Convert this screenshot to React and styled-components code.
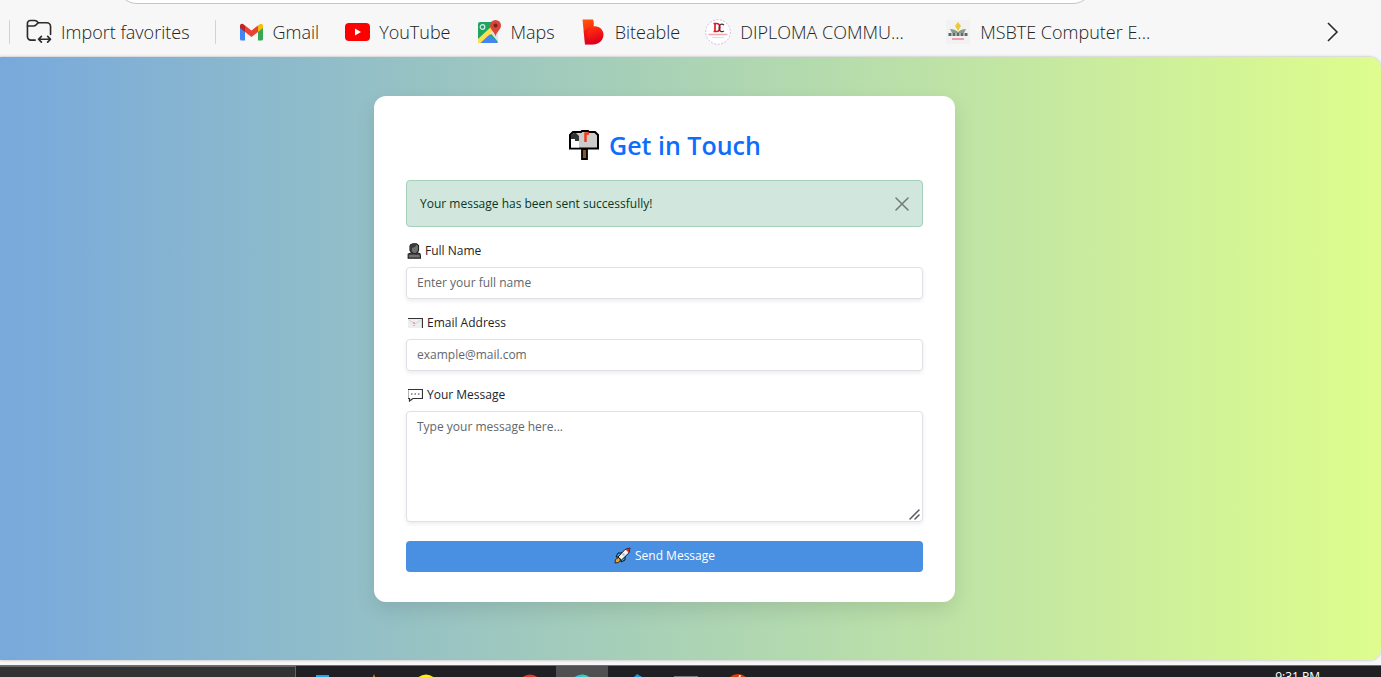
import React from "react";
import styled, { createGlobalStyle } from "styled-components";

const GlobalStyle = createGlobalStyle`
  *, *::before, *::after { box-sizing: border-box; }
  body {
    margin: 0;
    background: #f7f7f7;
    color: #212529;
    font-family: "Open Sans", "Noto Sans", sans-serif;
  }
  button, input, textarea { font: inherit; }
`;

const Screen = styled.div`
  display: flex;
  flex-direction: column;
  min-height: 100vh;
  overflow: hidden;
`;

const Header = styled.header`
  flex: none;
  background: #f7f7f7;
`;

const AddressRow = styled.div`
  display: flex;
  align-items: flex-end;
  height: 4px;
  padding: 0 288px 0 117px;
  overflow: hidden;
`;

const AddressInput = styled.input`
  flex: none;
  width: 100%;
  height: 40px;
  border: 1px solid #c4c4c4;
  border-radius: 20px;
  background: #ffffff;
`;

const Favorites = styled.nav`
  display: flex;
  align-items: center;
  height: 53px;
  padding: 2px 40px 0 9px;
`;

const Divider = styled.span`
  flex: none;
  width: 1px;
  height: 24px;
  background: #d2d2d2;
`;

const FavoriteList = styled.div`
  display: flex;
  flex: 1;
  gap: 25px;
  min-width: 0;
  margin-left: 22px;
`;

const favoriteLook = `
  display: flex;
  align-items: center;
  gap: 9px;
  flex: none;
  color: #222222;
  font-size: 18px;
  font-weight: 300;
  line-height: 26px;
  text-decoration: none;
  svg { flex: none; width: 26px; height: 26px; }
`;

const Favorite = styled.a`
  ${favoriteLook}
`;

const FavoriteText = styled.span`
  width: ${(p) => (p.$long ? "180px" : "auto")};
  overflow: hidden;
  white-space: nowrap;
`;

const ImportButton = styled.button`
  ${favoriteLook}
  margin: 0 25px 0 16px;
  padding: 0;
  border: 0;
  background: none;
`;

const MoreButton = styled.button`
  display: flex;
  flex: none;
  padding: 0;
  border: 0;
  background: none;
`;

const Page = styled.main`
  display: flex;
  flex: 1;
  justify-content: center;
  align-items: flex-start;
  padding: 39px 52px 58px 0;
  border-radius: 0 12px 12px 0;
  background: linear-gradient(to right, #78a9dc, #defd8d);
  box-shadow: 0 0 3px rgba(0, 0, 0, 0.3);
`;

const Card = styled.section`
  width: 100%;
  max-width: 581px;
  padding: 32px 32px 30px;
  border-radius: 12px;
  background: #ffffff;
  box-shadow: 0 8px 20px rgba(0, 0, 0, 0.1);
`;

const Title = styled.h1`
  display: flex;
  justify-content: center;
  align-items: center;
  gap: 9px;
  margin: 0 0 18px;
  color: #0d6efd;
  font-size: 25px;
  font-weight: 600;
  line-height: 34px;
`;

const Alert = styled.div`
  display: flex;
  align-items: center;
  justify-content: space-between;
  height: 47px;
  padding: 0 13px;
  border: 1px solid #a3cfbb;
  border-radius: 4px;
  background: #d1e7dd;
  color: #0a3622;
  font-size: 12px;
  line-height: 20px;
`;

const CloseButton = styled.button`
  display: flex;
  padding: 0;
  border: 0;
  background: none;
`;

const Field = styled.div`
  margin-top: 14px;
`;

const Label = styled.label`
  display: flex;
  align-items: center;
  gap: 4px;
  margin-bottom: 6px;
  font-size: 12px;
  line-height: 20px;
`;

const controlLook = `
  display: block;
  width: 100%;
  padding: 0 10px 2px;
  border: 1px solid #dee2e6;
  border-radius: 4px;
  background: #ffffff;
  color: #212529;
  font-size: 12px;
  line-height: 20px;
  box-shadow: 0 2px 4px rgba(0, 0, 0, 0.08);
  &::placeholder { color: #62676c; opacity: 1; }
`;

const TextInput = styled.input`
  ${controlLook}
  height: 32px;
`;

const MessageBox = styled.div`
  position: relative;
`;

const MessageInput = styled.textarea`
  ${controlLook}
  height: 111px;
  padding: 5px 10px;
  resize: vertical;
  &::-webkit-resizer { display: none; }
`;

const Grip = styled.svg`
  position: absolute;
  right: 2px;
  bottom: 2px;
  pointer-events: none;
`;

const SendButton = styled.button`
  display: flex;
  align-items: center;
  justify-content: center;
  gap: 4px;
  width: 100%;
  height: 31px;
  margin-top: 19px;
  padding: 0 0 2px;
  border: 0;
  border-radius: 4px;
  background: #4a90e2;
  color: #ffffff;
  font-size: 12px;
  line-height: 20px;
`;

const Taskbar = styled.footer`
  display: flex;
  flex: none;
  height: 12px;
  margin-top: 5px;
  border-top: 1px solid #6f6f70;
  background: #202024;
  overflow: hidden;
`;

const SearchArea = styled.div`
  flex: none;
  width: 296px;
  height: 40px;
  border: 1px solid #656565;
  border-width: 1px 1px 0 0;
  background: #333333;
`;

const TaskButton = styled.button`
  display: flex;
  flex: none;
  justify-content: center;
  width: 52px;
  height: 40px;
  padding: 7px 0 0;
  border: 0;
  background: ${(p) => (p.$active ? "#505053" : "transparent")};
`;

const Clock = styled.time`
  margin-left: auto;
  padding-right: 61px;
  color: #ffffff;
  font-size: 12px;
  line-height: 22px;
`;

const ImportIcon = () => (
  <svg viewBox="0 0 27 26" fill="none" stroke="#2b2b2b" strokeWidth="1.7" strokeLinecap="round" strokeLinejoin="round">
    <path d="M9.500 21.500H5a3.500 3.500 0 0 1-3.500-3.500V4a3 3 0 0 1 3-3h4.500a3 3 0 0 1 2 .8L12.800 3.400H21.500A4 4 0 0 1 25.500 7.400V15.500" />
    <path d="M1.500 6.800H8a3 3 0 0 0 2.100-.9L12.800 3.400" />
    <path d="M13 20.500H25.500M16 17.500L13 20.500l3 3M22.500 17.500l3 3-3 3" />
  </svg>
);

const GmailIcon = () => (
  <svg viewBox="0 0 26 26">
    <path d="M2 8v12a1.500 1.500 0 0 0 1.500 1.500H7V11z" fill="#4285f4" />
    <path d="M25 8v12a1.500 1.500 0 0 1-1.500 1.500H20V11z" fill="#34a853" />
    <path d="M20 6.500L22 5a2 2 0 0 1 3 1.700V9l-5 4z" fill="#fbbc04" />
    <path d="M2 9V6.700A2 2 0 0 1 5 5l2 1.500V13z" fill="#c5221f" />
    <path d="M7 6.500l6.500 5 6.500-5V13l-6.500 5L7 13z" fill="#ea4335" />
  </svg>
);

const YouTubeIcon = () => (
  <svg viewBox="0 0 26 26">
    <rect x="1" y="4" width="25" height="18" rx="4" fill="#ff0000" />
    <path d="M11 9.500v7l6-3.500z" fill="#ffffff" />
  </svg>
);

const MapsIcon = () => (
  <svg viewBox="0 0 26 26">
    <rect x="2" y="3" width="20" height="21" rx="2" fill="#1fa463" />
    <path d="M2 20L18 5l4 4L5 24H3a1 1 0 0 1-1-1z" fill="#ffdf4d" />
    <path d="M4.500 24L13.500 15.500 22 24z" fill="#4285f4" />
    <path d="M14.500 14L22 6v17z" fill="#dfe2e6" />
    <circle cx="6.500" cy="8" r="2.300" fill="none" stroke="#d9f2e4" strokeWidth="1.200" />
    <path d="M19.500 1a5.500 5.500 0 0 1 5.500 5.500c0 4-4.500 6-5.500 11-1-5-5.500-7-5.500-11A5.500 5.500 0 0 1 19.500 1z" fill="#db4437" />
    <circle cx="19.500" cy="6.500" r="2" fill="#7b231d" />
  </svg>
);

const BiteableIcon = () => (
  <svg viewBox="0 0 26 26">
    <defs>
      <linearGradient id="bite" x1="0" y1="0" x2="0.300" y2="1">
        <stop offset="0" stopColor="#ff5a0a" />
        <stop offset="0.550" stopColor="#fb2410" />
        <stop offset="1" stopColor="#df001c" />
      </linearGradient>
    </defs>
    <path d="M2.500 0.500h10.500c1 2.500 1 4.500.5 6.700C19.500 6.500 23.500 11 23.500 15.500S20 25.500 13 25.500H5z" fill="url(#bite)" />
    <path d="M13.500 7.200c-2 .8-4.500 2.800-6.500 6.300 0 5 2.500 9 6 12H5L3.500 12z" fill="#d9001e" opacity=".35" />
  </svg>
);

const DiplomaIcon = () => (
  <svg viewBox="0 0 26 26">
    <circle cx="13" cy="13" r="12.300" fill="#ffffff" stroke="#d5b4f3" strokeWidth="1" strokeDasharray="2 1.500" />
    <path d="M10 4.500h1.500c4.500 0 4.500 8 0 8H10zM8.500 4.500h3M8.500 12.500h3" fill="none" stroke="#e11b2b" strokeWidth="1.700" />
    <path d="M19 6c-3-2-5 0-5 3s2.500 4.500 5 3" fill="none" stroke="#3b3438" strokeWidth="1.200" />
    <path d="M3.500 15.500h19" stroke="#f2adb0" strokeWidth="1.600" />
    <path d="M7 18.500h12" stroke="#dedede" strokeWidth="1" />
  </svg>
);

const MsbteIcon = () => (
  <svg viewBox="0 0 26 26">
    <rect x="1" y="1" width="24" height="24" fill="#f2f2f2" />
    <path d="M5 10c3 0 6 1 8 3 2-2 5-3 8-3l-2 4H7z" fill="#8c9b8a" />
    <path d="M13 3l3 4-3 5-3-5z" fill="#eccb31" />
    <path d="M3.500 15.500h19" stroke="#5c6979" strokeWidth="3" strokeDasharray="3 1" />
    <path d="M7 20h12" stroke="#e58391" strokeWidth="1.400" />
  </svg>
);

const MailboxIcon = () => (
  <svg width="32" height="32" viewBox="0 0 32 32" aria-hidden="true">
    <path d="M14 20h5v10h-5z" fill="#8a5430" stroke="#000000" strokeWidth="1.800" />
    <path d="M5 3h8l1-1h6l1 1h6l3 3v13.500H2V6z" fill="#cccccc" stroke="#000000" strokeWidth="2" />
    <path d="M3 10V6l3-2h2l3 3v5H7v-2z" fill="#333333" />
    <path d="M3 10h4v2h4v6.500H3z" fill="#ffffff" />
    <path d="M17.500 13V4.500H21" fill="none" stroke="#f03a17" strokeWidth="2.500" />
  </svg>
);

const PersonIcon = () => (
  <svg width="15" height="16" viewBox="0 0 15 16" aria-hidden="true">
    <path d="M5 1.500L7 .8h3.500l2 1.700v5l-1.500 2 3 1.500.8 4.200H2.200v-4L6 9.500l-2-2V3z" fill="#707070" stroke="#222222" strokeWidth="1.200" />
    <path d="M4 3.500L6 1h5L9 4 6 5v3L4 7z" fill="#3a3a3a" />
    <path d="M3 11h11M6 10l5 1" stroke="#222222" />
  </svg>
);

const MailIcon = () => (
  <svg width="17" height="12" viewBox="0 0 17 12" aria-hidden="true">
    <rect x="2" y="1" width="15" height="10" fill="#eeeeee" />
    <path d="M2 1.500h15M16.500 1v10" stroke="#333333" strokeWidth="1.200" />
    <path d="M3 3l6 4 6-4" stroke="#d4d4d4" fill="none" />
    <path d="M8 5v2M8 8v1" stroke="#e57474" />
  </svg>
);

const ChatIcon = () => (
  <svg width="17" height="14" viewBox="0 0 17 14" fill="none" stroke="#333333" aria-hidden="true">
    <path d="M2 1.500h14.500v9H7L3.500 13v-2.500H2" strokeWidth="1.200" />
    <path d="M2.500 2v8" stroke="#b5b5b5" />
    <path d="M5 6h1.500M8.500 6H10M12 6h1.500" />
  </svg>
);

const RocketIcon = () => (
  <svg width="17" height="17" viewBox="0 0 17 17" strokeLinejoin="round" aria-hidden="true">
    <path d="M2 10l2-4h4L6 10zM7 15l4-2V9l-4 3z" fill="#36b6e5" stroke="#111111" />
    <path d="M4.500 10.500L1.500 12.500 1 16l3.500-.5 2-2.500z" fill="#f7a12a" stroke="#111111" strokeWidth=".8" />
    <path d="M4 10L11 2.500 16 1l-1.200 5L7.500 13z" fill="#f4f4f4" stroke="#111111" />
    <path d="M11.500 2.500L16 1l-1.300 4.500z" fill="#e0202c" />
    <circle cx="9.500" cy="7.500" r="1.200" fill="#9bbdd0" />
  </svg>
);

const favorites = [
  { name: "Gmail", Icon: GmailIcon },
  { name: "YouTube", Icon: YouTubeIcon },
  { name: "Maps", Icon: MapsIcon },
  { name: "Biteable", Icon: BiteableIcon },
  { name: "DIPLOMA COMMU...", Icon: DiplomaIcon, long: true },
  { name: "MSBTE Computer E...", Icon: MsbteIcon, long: true },
];

const Disc = ({ color, half }) => (
  <svg width="26" height="26" viewBox="0 0 26 26">
    <circle cx="13" cy="13.500" r="12" fill={color} />
    {half && <path d="M13 1.500a12 12 0 0 1 8 3.500h-8z" fill={half} />}
  </svg>
);

const tasks = [
  { name: "Store", art: <svg width="26" height="26"><path d="M7 2h13v3h3v18H4V5h3z" fill="#1ba8ef" /></svg> },
  { name: "Player", art: <svg width="26" height="26"><path d="M13 1l8 22H5z" fill="#e87a12" /></svg> },
  { name: "Notes", art: <Disc color="#fff200" /> },
  { name: "Terminal", art: null },
  { name: "Browser", art: <Disc color="#e33b2e" /> },
  { name: "Edge", art: <Disc color="#2ec4dc" half="#39d0b0" />, active: true },
  { name: "Editor", art: <svg width="26" height="26"><path d="M16 1l7 4v18H8L2 15z" fill="#1c93dc" /></svg> },
  { name: "Window", art: <svg width="26" height="26"><path d="M1 4h24" stroke="#77777a" strokeWidth="2" /></svg> },
  { name: "Server", art: <svg width="26" height="26"><circle cx="13" cy="13" r="12" fill="#dc3e0b" /><path d="M13 6l2-4v6" stroke="#ffffff" fill="none" /></svg> },
];

export default function App() {
  return (
    <Screen>
      <GlobalStyle />
      <Header>
        <AddressRow>
          <AddressInput aria-label="Address" />
        </AddressRow>
        <Favorites aria-label="Favorites">
          <Divider />
          <ImportButton type="button">
            <ImportIcon />
            Import favorites
          </ImportButton>
          <Divider />
          <FavoriteList>
            {favorites.map(({ name, Icon, long }) => (
              <Favorite href="#" key={name}>
                <Icon />
                <FavoriteText $long={long}>{name}</FavoriteText>
              </Favorite>
            ))}
          </FavoriteList>
          <MoreButton type="button" aria-label="More favorites">
            <svg width="16" height="22" viewBox="0 0 16 22" fill="none" stroke="#2b2b2b" strokeWidth="1.600">
              <path d="M3 2l9 9-9 9" />
            </svg>
          </MoreButton>
        </Favorites>
      </Header>
      <Page>
        <Card>
          <Title>
            <MailboxIcon />
            Get in Touch
          </Title>
          <Alert role="alert">
            Your message has been sent successfully!
            <CloseButton type="button" aria-label="Close">
              <svg width="14" height="14" viewBox="0 0 14 14" stroke="#737f79" strokeWidth="1.600" strokeLinecap="round">
                <path d="M1 1l12 12M13 1L1 13" />
              </svg>
            </CloseButton>
          </Alert>
          <form>
            <Field>
              <Label htmlFor="name"><PersonIcon />Full Name</Label>
              <TextInput id="name" placeholder="Enter your full name" />
            </Field>
            <Field>
              <Label htmlFor="email"><MailIcon />Email Address</Label>
              <TextInput id="email" type="email" placeholder="example@mail.com" />
            </Field>
            <Field>
              <Label htmlFor="message"><ChatIcon />Your Message</Label>
              <MessageBox>
                <MessageInput id="message" placeholder="Type your message here..." />
                <Grip width="12" height="12" viewBox="0 0 12 12" stroke="#55585b" strokeWidth="1.500" strokeLinecap="round">
                  <path d="M1 11L10 2M6 11l4-4" />
                </Grip>
              </MessageBox>
            </Field>
            <SendButton type="button"><RocketIcon />Send Message</SendButton>
          </form>
        </Card>
      </Page>
      <Taskbar>
        <SearchArea />
        {tasks.map(({ name, art, active }) => (
          <TaskButton type="button" key={name} aria-label={name} $active={active}>{art}</TaskButton>
        ))}
        <Clock>9:31 PM</Clock>
      </Taskbar>
    </Screen>
  );
}
